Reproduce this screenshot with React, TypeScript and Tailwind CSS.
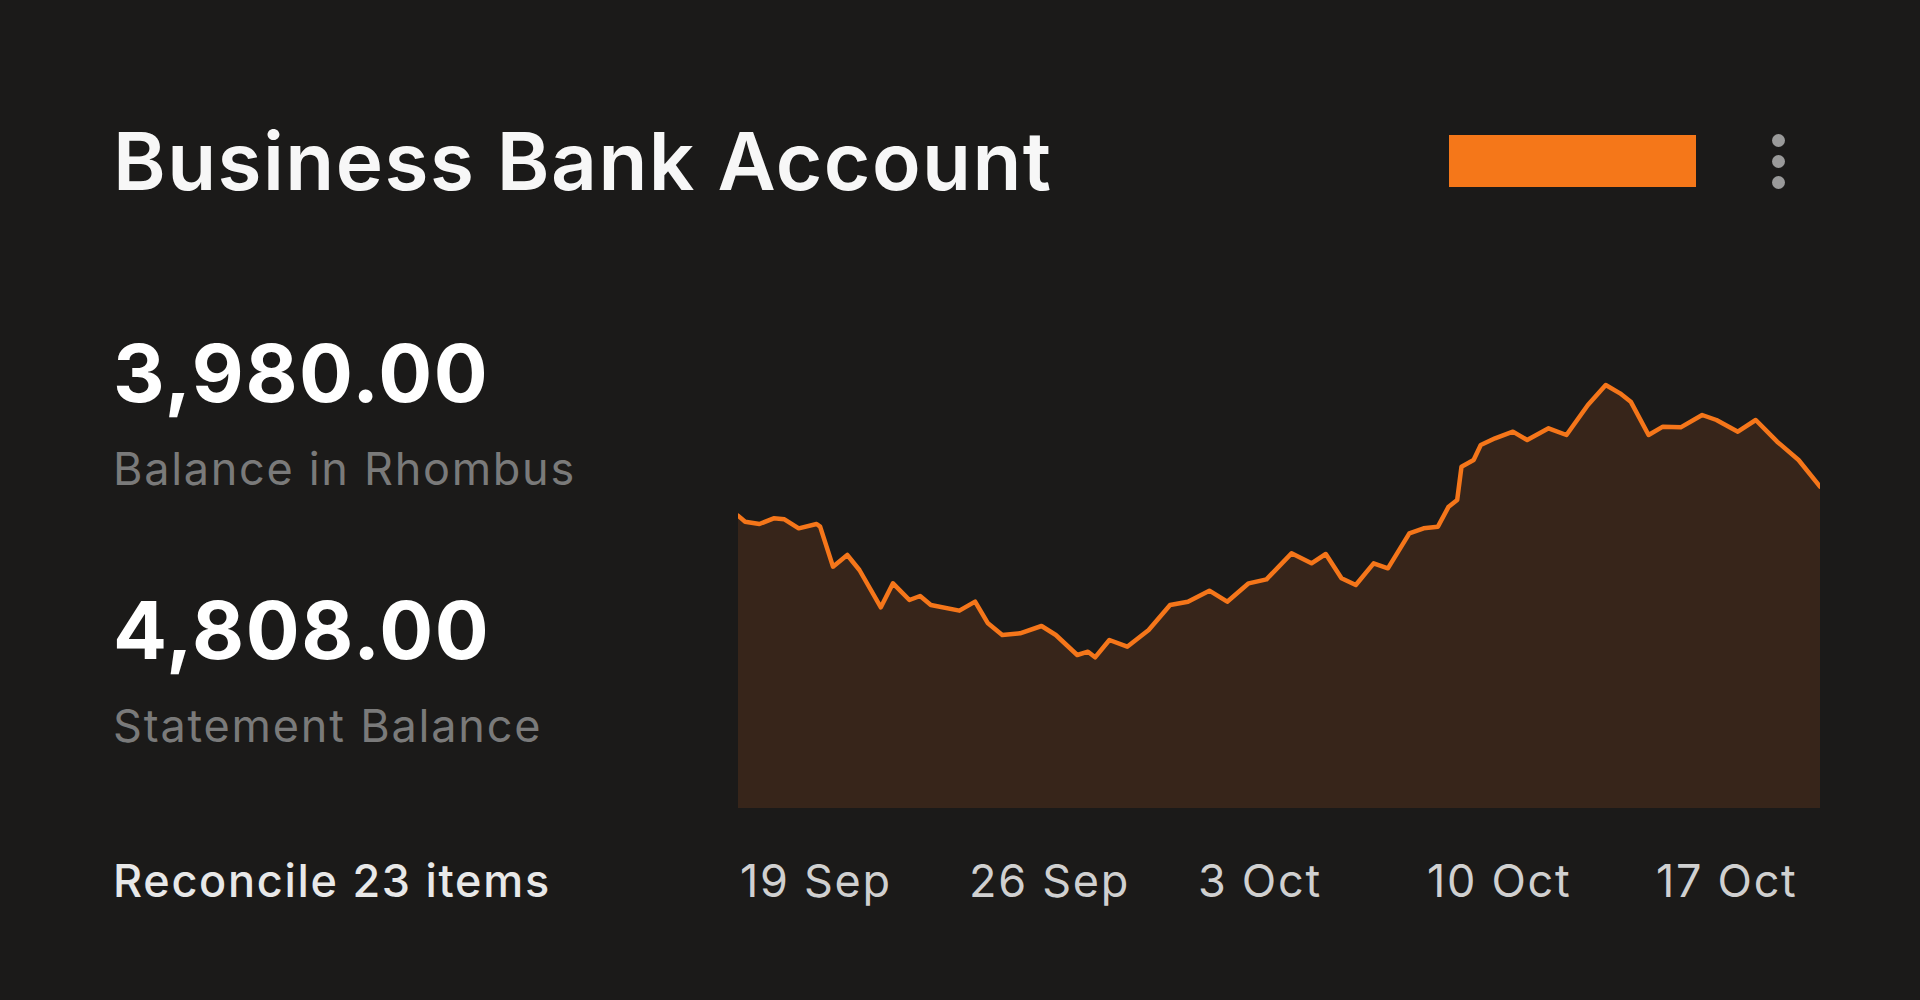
const points: [number, number][] = [
  [25, 437], [35, 455], [55, 462], [75, 445], [90, 448], [110, 475], [135, 462], [140, 470],
  [158, 590], [178, 555], [195, 600], [225, 712], [242, 640], [265, 690], [280, 678], [295, 705],
  [335, 722], [357, 695], [375, 760], [395, 795], [420, 790], [450, 768], [470, 795], [500, 855],
  [515, 845], [525, 862], [545, 810], [570, 830], [600, 780], [630, 705], [655, 695], [685, 662],
  [710, 695], [740, 640], [765, 628], [800, 550], [828, 580], [848, 552], [870, 625], [890, 645],
  [915, 580], [935, 595], [965, 490], [985, 475], [1005, 470], [1020, 410], [1032, 390], [1038, 290],
  [1055, 270], [1065, 225], [1085, 205], [1110, 185], [1130, 210], [1160, 175], [1185, 195],
  [1215, 105], [1240, 45], [1260, 70], [1275, 95], [1300, 195], [1320, 170], [1345, 172],
  [1375, 135], [1395, 150], [1425, 185], [1450, 150], [1480, 215], [1510, 270], [1540, 350],
];

const line = points.map(([x, y], i) => `${i ? 'L' : 'M'}${x},${y}`).join(' ');
const area = `${line} L1540,1314 L25,1314 Z`;

const ticks = ['19 Sep', '26 Sep', '3 Oct', '10 Oct', '17 Oct'];

function BalanceChart() {
  return (
    <svg viewBox="25 0 1515 1314" preserveAspectRatio="none" className="block h-[438px] w-full">
      <path d={area} fill="#37251a" />
      <path
        d={line}
        fill="none"
        stroke="#f5761a"
        strokeWidth={4.5}
        strokeLinejoin="round"
        strokeLinecap="round"
        vectorEffect="non-scaling-stroke"
      />
    </svg>
  );
}

export default function App() {
  return (
    <div className="min-h-screen bg-[#1b1a19] pl-[113px] pr-[100px] pt-[121px] font-['Inter',sans-serif]">
      <header className="mr-[35px] flex h-[80px] items-center">
        <h1 className="text-[80px] font-semibold leading-none tracking-[0.018em] text-[#f7f7f7]">
          Business Bank Account
        </h1>
        <div className="ml-auto h-[52px] w-[247px] bg-[#f57719]" />
        <button className="ml-[76px] flex w-[13px] flex-col gap-[8px]">
          <span className="h-[13px] w-[13px] rounded-full bg-[#9a9a9a]" />
          <span className="h-[13px] w-[13px] rounded-full bg-[#9a9a9a]" />
          <span className="h-[13px] w-[13px] rounded-full bg-[#9a9a9a]" />
        </button>
      </header>

      <div className="mt-[132px] flex">
        <div className="w-[625px] shrink-0">
          <div className="text-[80px] font-bold leading-none tracking-[0.02em] text-white">3,980.00</div>
          <div className="mt-[33px] text-[45px] leading-none tracking-[0.038em] text-[#7a7a7a]">
            Balance in Rhombus
          </div>
          <div className="mt-[99px] text-[80px] font-bold leading-none tracking-[0.02em] text-white">4,808.00</div>
          <div className="mt-[33px] text-[45px] leading-none tracking-[0.04em] text-[#7a7a7a]">
            Statement Balance
          </div>
        </div>
        <div className="mt-[37px] flex-1">
          <BalanceChart />
        </div>
      </div>

      <div className="mt-[50px] flex text-[45px] leading-none tracking-[0.038em]">
        <div className="w-[627px] shrink-0 font-medium text-[#e8e8e8]">Reconcile 23 items</div>
        <div className="flex text-[#d0d0d0]">
          {ticks.map((t) => (
            <span key={t} className="w-[229px]">
              {t}
            </span>
          ))}
        </div>
      </div>
    </div>
  );
}
